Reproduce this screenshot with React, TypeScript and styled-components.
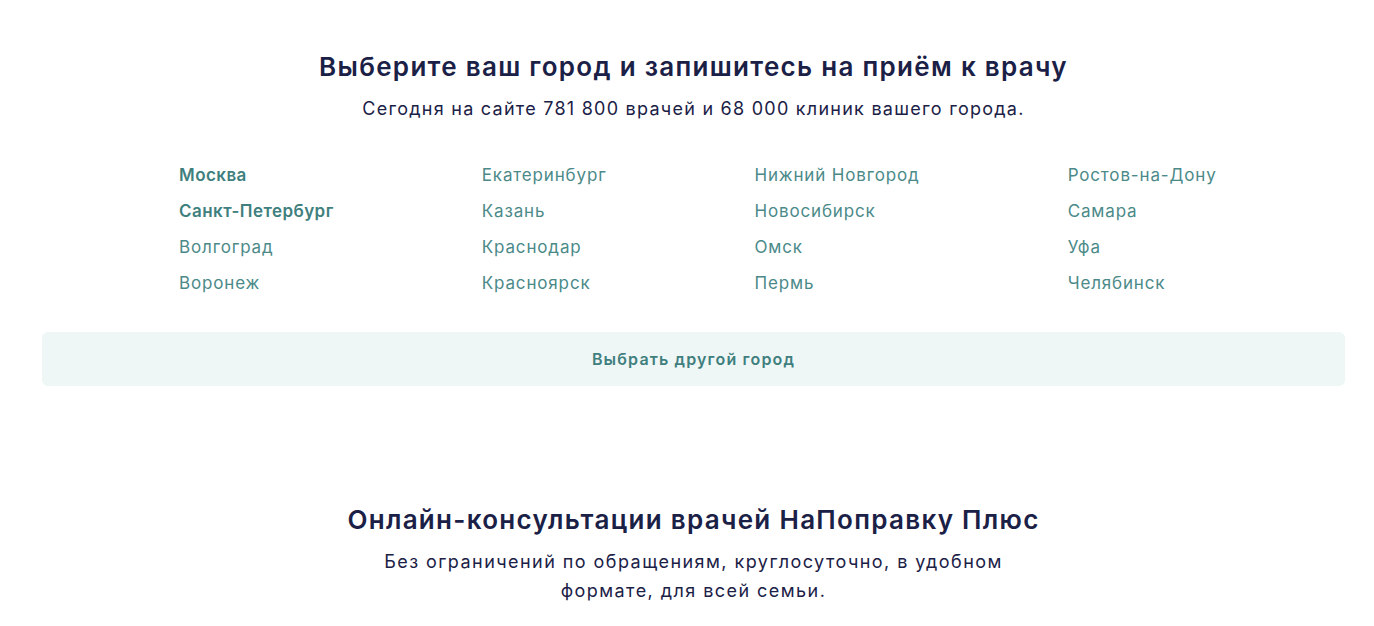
import styled, { createGlobalStyle } from 'styled-components'

const GlobalStyle = createGlobalStyle`
  body {
    margin: 0;
    background: #fff;
    font-family: Inter, "Noto Sans", sans-serif;
  }
`

const columns = [
  [
    { name: 'Москва', main: true },
    { name: 'Санкт-Петербург', main: true },
    { name: 'Волгоград' },
    { name: 'Воронеж' },
  ],
  [{ name: 'Екатеринбург' }, { name: 'Казань' }, { name: 'Краснодар' }, { name: 'Красноярск' }],
  [{ name: 'Нижний Новгород' }, { name: 'Новосибирск' }, { name: 'Омск' }, { name: 'Пермь' }],
  [{ name: 'Ростов-на-Дону' }, { name: 'Самара' }, { name: 'Уфа' }, { name: 'Челябинск' }],
]

const App = () => {
  return (
    <Page>
      <GlobalStyle />
      <Section>
        <Title>Выберите ваш город и запишитесь на приём к врачу</Title>
        <Lead>Сегодня на сайте 781 800 врачей и 68 000 клиник вашего города.</Lead>
        <Cities>
          {columns.map((col, i) => (
            <Column key={i}>
              {col.map((c) => (
                <CityLink key={c.name} href="#" $main={'main' in c && !!c.main}>
                  {c.name}
                </CityLink>
              ))}
            </Column>
          ))}
        </Cities>
        <OtherCity type="button">Выбрать другой город</OtherCity>
      </Section>
      <Promo>
        <Title>Онлайн-консультации врачей НаПоправку Плюс</Title>
        <PromoText>
          Без ограничений по обращениям, круглосуточно, в удобном
          <br />
          формате, для всей семьи.
        </PromoText>
      </Promo>
    </Page>
  )
}

const Page = styled.div`
  width: 1303px;
  padding-left: 42px;
`

const Section = styled.section`
  display: flex;
  flex-direction: column;
  align-items: center;
  padding-top: 50px;
`

const Title = styled.h2`
  margin: 0;
  font-size: 26px;
  line-height: 34px;
  font-weight: 600;
  color: #1b2146;
  letter-spacing: 1.3px;
`

const Lead = styled.p`
  margin: 12px 0 0;
  font-size: 18px;
  line-height: 26px;
  color: #1b2146;
  letter-spacing: 1.25px;
`

const Cities = styled.div`
  align-self: stretch;
  display: flex;
  gap: 148px;
  margin-top: 35px;
  padding: 0 137px;
`

const Column = styled.div`
  display: flex;
  flex-direction: column;
  flex-shrink: 0;
  white-space: nowrap;
`

const CityLink = styled.a<{ $main?: boolean }>`
  font-size: 17px;
  line-height: 36px;
  text-decoration: none;
  color: ${({ $main }) => ($main ? '#3f7f7e' : '#4b8a89')};
  font-weight: ${({ $main }) => ($main ? 600 : 400)};
  letter-spacing: ${({ $main }) => ($main ? '0.45px' : '0.85px')};
`

const OtherCity = styled.button`
  align-self: stretch;
  margin-top: 31px;
  height: 54px;
  border: none;
  border-radius: 6px;
  background: #eff7f6;
  font-family: inherit;
  font-size: 16px;
  font-weight: 600;
  color: #3f7f7e;
  letter-spacing: 1.15px;
  cursor: pointer;
`

const Promo = styled.section`
  display: flex;
  flex-direction: column;
  align-items: center;
  margin-top: 117px;
`

const PromoText = styled.p`
  margin: 10px 0 0;
  font-size: 18px;
  line-height: 29px;
  text-align: center;
  color: #1b2146;
  letter-spacing: 1.45px;
`

export default App
